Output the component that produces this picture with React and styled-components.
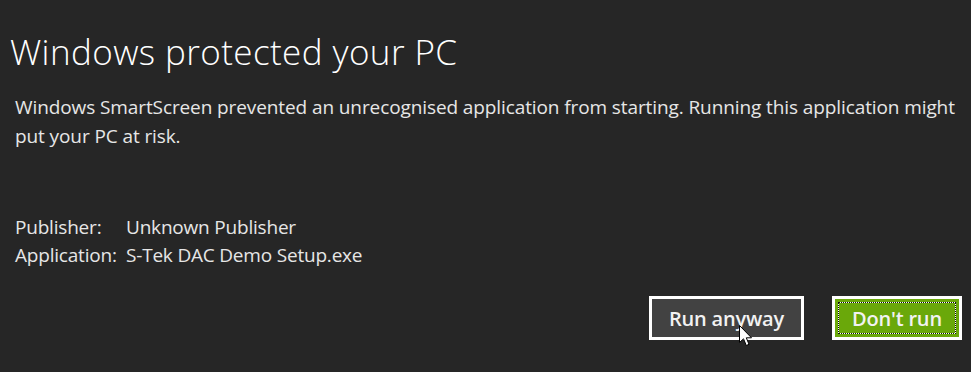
import React from "react";
import styled, { createGlobalStyle } from "styled-components";

const GlobalStyle = createGlobalStyle`
  html, body {
    margin: 0;
    padding: 0;
    background: #262626;
  }
  body {
    font-family: "Open Sans", "Noto Sans", "Liberation Sans", sans-serif;
    color: #e6e6e6;
  }
`;

const Dialog = styled.div`
  position: relative;
  width: 971px;
  height: 372px;
  box-sizing: border-box;
  padding: 32px 9px 0 15px;
  display: flex;
  flex-direction: column;
  background: #262626;
  overflow: hidden;
`;

const Title = styled.h1`
  margin: 0 0 0 -5px;
  font-size: 35px;
  line-height: 40px;
  font-weight: 300;
  color: #ffffff;
  letter-spacing: 0.4px;
`;

const Message = styled.p`
  margin: 21px 0 0;
  width: 948px;
  font-size: 19px;
  line-height: 29px;
  font-weight: 400;
  letter-spacing: -0.1px;
`;

const Details = styled.div`
  margin-top: 62px;
  display: grid;
  grid-template-columns: 111px auto;
  font-size: 19px;
  line-height: 28px;
  letter-spacing: -0.2px;
`;

const Buttons = styled.div`
  margin-top: 27px;
  display: flex;
  justify-content: flex-end;
  gap: 28px;
`;

const Button = styled.button`
  position: relative;
  box-sizing: border-box;
  width: ${(p) => p.$width}px;
  height: 44px;
  border: 3px solid #ffffff;
  border-radius: 0;
  background: ${(p) => (p.$primary ? "#6aa80a" : "#424242")};
  color: #f2f2f2;
  font-family: "Open Sans", "Noto Sans", sans-serif;
  font-size: 20px;
  font-weight: 600;
  letter-spacing: -0.2px;
  padding: 0;
  cursor: pointer;

  ${(p) =>
    p.$focused &&
    `
    &::before, &::after {
      content: "";
      position: absolute;
      inset: 3px;
      border: 1px solid #ffffff;
    }
    &::after {
      border: 1px dotted #111;
    }
  `}
`;

const Pointer = styled.svg`
  position: absolute;
  left: 739px;
  top: 325px;
  pointer-events: none;
`;

export default function App() {
  return (
    <>
      <GlobalStyle />
      <Dialog>
        <Title>Windows protected your PC</Title>
        <Message>
          Windows SmartScreen prevented an unrecognised application from starting. Running this
          application might put your PC at risk.
        </Message>
        <Details>
          <span>Publisher:</span>
          <span>Unknown Publisher</span>
          <span>Application:</span>
          <span>S-Tek DAC Demo Setup.exe</span>
        </Details>
        <Buttons>
          <Button $width={155}>Run anyway</Button>
          <Button $width={130} $primary $focused>
            Don't run
          </Button>
        </Buttons>
        <Pointer width="14" height="24" viewBox="0 0 14 24">
          <path
            d="M0.5 0.5 L0.5 17.5 L4.5 13.8 L7.3 20.5 L10 19.3 L7.3 12.8 L12.5 12.8 Z"
            fill="#ffffff"
            stroke="#000000"
            strokeWidth="1"
            strokeLinejoin="miter"
          />
        </Pointer>
      </Dialog>
    </>
  );
}
